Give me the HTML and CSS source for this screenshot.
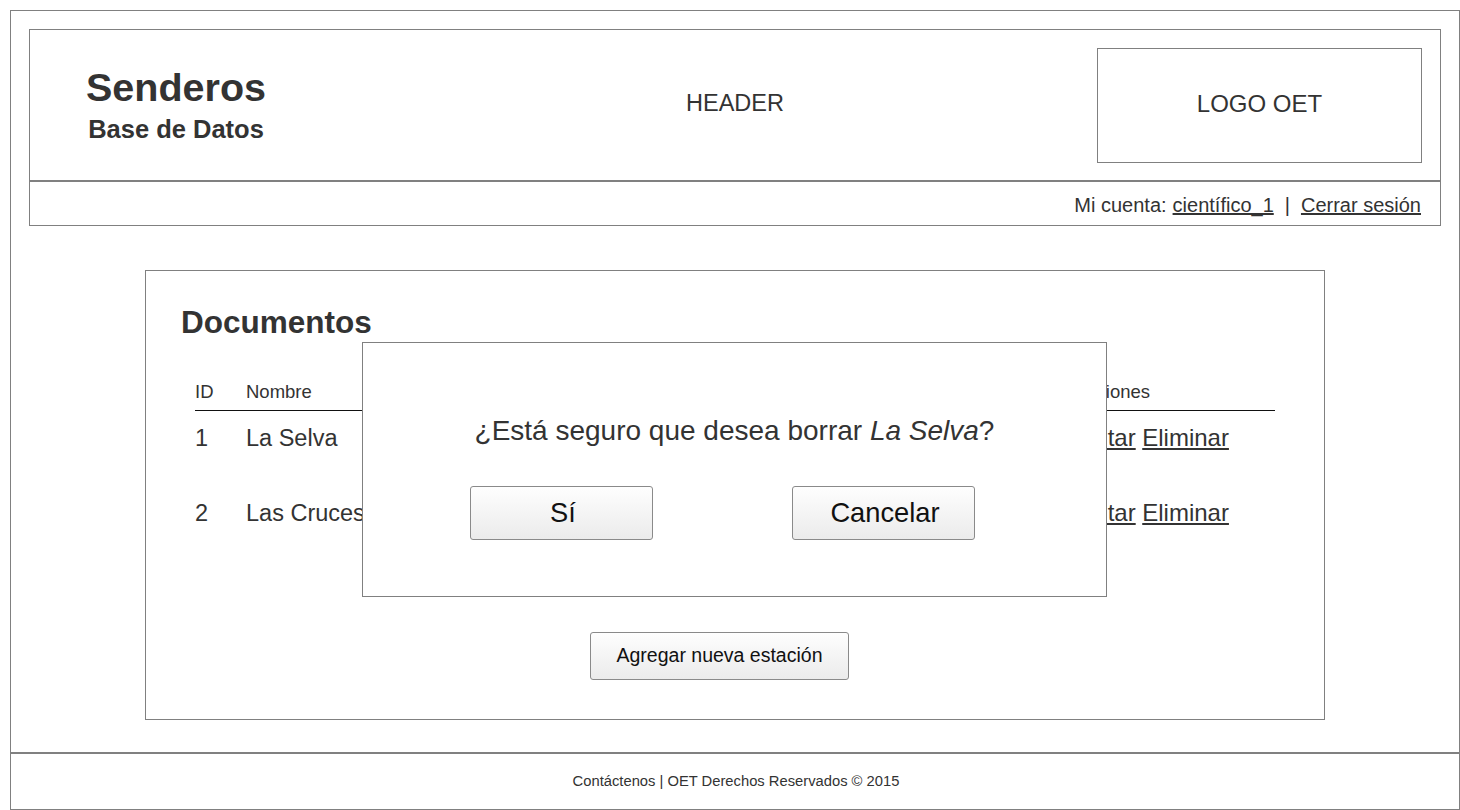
FILE: index.html
```html
<!DOCTYPE html>
<html lang="es">
<head>
<meta charset="utf-8">
<title>Senderos - Documentos</title>
<link rel="stylesheet" href="styles.css">
</head>
<body>
<div class="frame">
  <header class="site-header">
    <div class="brand-row">
      <div class="brand">
        <div class="brand-title">Senderos</div>
        <div class="brand-subtitle">Base de Datos</div>
      </div>
      <div class="header-label">HEADER</div>
      <div class="logo-box">LOGO OET</div>
    </div>
    <div class="account-bar">
      <span>Mi cuenta:</span>
      <a href="#" class="link">científico_1</a>
      <span class="sep">|</span>
      <a href="#" class="link">Cerrar sesión</a>
    </div>
  </header>

  <main class="main">
    <section class="panel">
      <h1 class="panel-title">Documentos</h1>
      <table class="doc-table">
        <thead>
          <tr>
            <th class="col-id">ID</th>
            <th class="col-name">Nombre</th>
            <th class="col-actions">Acciones</th>
          </tr>
        </thead>
        <tbody>
          <tr>
            <td>1</td>
            <td>La Selva</td>
            <td><a href="#" class="link">Editar</a> <a href="#" class="link">Eliminar</a></td>
          </tr>
          <tr>
            <td>2</td>
            <td>Las Cruces</td>
            <td><a href="#" class="link">Editar</a> <a href="#" class="link">Eliminar</a></td>
          </tr>
        </tbody>
      </table>
      <div class="panel-actions">
        <button class="btn btn-add" type="button">Agregar nueva estación</button>
      </div>

      <div class="modal">
        <p class="modal-text">¿Está seguro que desea borrar <em>La Selva</em>?</p>
        <div class="modal-buttons">
          <button class="btn btn-modal" type="button">Sí</button>
          <button class="btn btn-modal" type="button">Cancelar</button>
        </div>
      </div>
    </section>
  </main>

  <footer class="site-footer">Contáctenos | OET Derechos Reservados © 2015</footer>
</div>
</body>
</html>
```

FILE: styles.css
```css
* { box-sizing: border-box; }

html, body {
  background: #ffffff;
}

body {
  margin: 10px 0 0 10px;
  font-family: "Liberation Sans", Arial, Helvetica, sans-serif;
  color: #333333;
}

.frame {
  width: 1450px;
  height: 800px;
  border: 1px solid #808080;
  padding: 18px 18px 0 18px;
  display: flex;
  flex-direction: column;
}

/* Header */
.site-header {
  height: 197px;
  border: 1px solid #808080;
  display: flex;
  flex-direction: column;
  flex: none;
}

.brand-row {
  height: 150px;
  padding: 18px 18px 17px 18px;
  display: grid;
  grid-template-columns: 1fr auto 1fr;
  align-items: center;
}

.brand {
  width: 200px;
  margin-left: 28px;
  text-align: center;
  font-weight: bold;
  margin-top: -2px;
}

.brand-title {
  font-size: 39.5px;
  line-height: 40px;
}

.brand-subtitle {
  font-size: 25.5px;
  line-height: 28px;
  margin-top: 8px;
}

.header-label {
  font-size: 23.5px;
  line-height: 26px;
  margin-top: -6px;
}

.logo-box {
  justify-self: end;
  width: 325px;
  height: 115px;
  border: 1px solid #808080;
  display: flex;
  align-items: center;
  justify-content: center;
  font-size: 24px;
  padding-bottom: 3px;
}

.account-bar {
  flex: 1;
  border-top: 2px solid #808080;
  display: flex;
  align-items: center;
  justify-content: flex-end;
  padding: 3px 19px 0 0;
  font-size: 20px;
  gap: 6px;
}

.account-bar .sep {
  margin: 0 5px;
}

.link {
  color: #333333;
  text-decoration: underline;
}

/* Main */
.main {
  flex: 1;
  padding-top: 44px;
}

.panel {
  position: relative;
  width: 1180px;
  height: 450px;
  margin: 0 auto;
  border: 1px solid #808080;
  padding: 33px 49px 0 49px;
}

.panel-title {
  margin: 0 0 0 -14px;
  font-size: 31.5px;
  line-height: 36px;
  font-weight: bold;
}

.doc-table {
  width: 100%;
  margin-top: 41px;
  border-collapse: collapse;
}

.doc-table th {
  text-align: left;
  font-weight: normal;
  font-size: 18.5px;
  line-height: 22px;
  padding: 0 0 7px 0;
  border-bottom: 1px solid #111111;
}

.doc-table th.col-actions {
  padding-left: 2px;
}

.doc-table td {
  font-size: 23.5px;
  line-height: 28px;
  height: 75px;
  padding: 13px 0 0 0;
  vertical-align: top;
}

.doc-table td .link {
  font-size: 24px;
}

.col-id { width: 51px; }
.col-actions { width: 202px; }

.panel-actions {
  margin-top: 71px;
  padding-left: 395px;
}

.btn {
  font-family: "Liberation Sans", Arial, Helvetica, sans-serif;
  color: #111111;
  border: 1px solid #8a8a8a;
  border-radius: 3px;
  background: linear-gradient(#fefefe, #ebebeb);
  padding: 0;
}

.btn-add {
  width: 259px;
  height: 48px;
  font-size: 19.5px;
}

/* Modal */
.modal {
  position: absolute;
  left: 216px;
  top: 71px;
  width: 745px;
  height: 255px;
  border: 1px solid #808080;
  background: #ffffff;
  padding: 72px 0 0 0;
}

.modal-text {
  margin: 0;
  text-align: center;
  font-size: 28px;
  line-height: 32px;
}

.modal-buttons {
  margin-top: 39px;
  padding-left: 107px;
  display: flex;
  gap: 139px;
}

.btn-modal {
  width: 183px;
  height: 54px;
  font-size: 27.3px;
  padding-left: 3px;
}

/* Footer */
.site-footer {
  flex: none;
  height: 57px;
  margin: 0 -18px;
  border-top: 2px solid #808080;
  display: flex;
  align-items: center;
  justify-content: center;
  font-size: 14.75px;
  padding: 0 0 2px 2px;
}
```
